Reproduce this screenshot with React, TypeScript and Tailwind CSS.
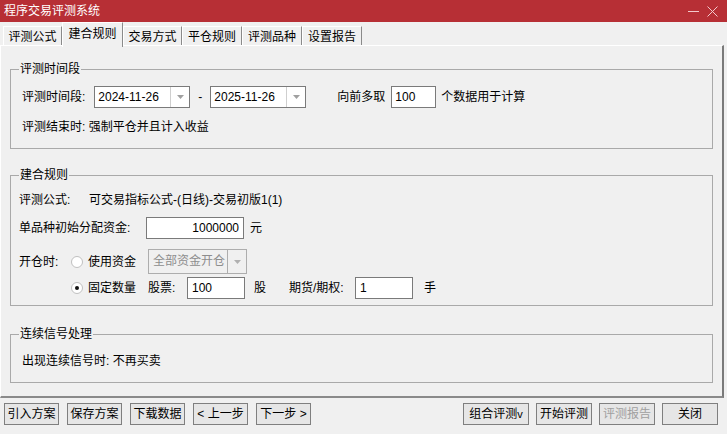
import React from "react";

const FONT = { fontFamily: '"Liberation Sans", "Noto Sans CJK SC", sans-serif' };

function Tri({ color = "#a0a0a0" }: { color?: string }) {
  return (
    <svg width="7" height="4" viewBox="0 0 7 4">
      <path d="M0 0 L7 0 L3.5 4 Z" fill={color} />
    </svg>
  );
}

function DateBox({ value }: { value: string }) {
  return (
    <div className="flex h-[22px] w-[96px] border border-[#7a7a7a] bg-white">
      <div className="flex-1 pl-[3px] leading-[20px]">{value}</div>
      <div className="flex w-[19px] items-center justify-center border-l border-[#cfcfcf]">
        <Tri />
      </div>
    </div>
  );
}

function Radio({ checked }: { checked?: boolean }) {
  return (
    <div className="flex h-[12px] w-[12px] items-center justify-center rounded-full border border-[#c0c0c0] bg-white">
      {checked && <div className="h-[4px] w-[4px] rounded-full bg-[#111]" />}
    </div>
  );
}

function Btn({ children, w, disabled }: { children: React.ReactNode; w: string; disabled?: boolean }) {
  return (
    <div
      className={`flex h-[22px] items-center justify-center border border-[#7f7f7f] bg-[#e6e6e6] ${w} ${
        disabled ? "text-[#a0a0a0]" : "text-black"
      }`}
    >
      {children}
    </div>
  );
}

function Tab({ label, active, w }: { label: string; active?: boolean; w: string }) {
  return (
    <div
      className={`flex items-center justify-center border-l border-t border-r border-l-white border-t-white border-r-[#8a8a8a] ${w} ${
        active ? "relative z-10 -mb-[2px] h-[25px] bg-[#f0f0f0] pb-[3px]" : "h-[19px] pt-[1px]"
      }`}
    >
      {label}
    </div>
  );
}

export default function App() {
  return (
    <div
      className="flex h-[434px] w-[727px] flex-col overflow-hidden bg-[#f0f0f0] text-[12px] text-[#000]"
      style={FONT}
    >
      {/* Title bar */}
      <div className="flex h-[22px] shrink-0 items-center justify-between bg-[#b72f35] pl-[4px] pr-[9px] text-white">
        <span className="text-[12px] leading-[16px]">程序交易评测系统</span>
        <div className="flex items-center gap-[8px]">
          <svg width="11" height="11" viewBox="0 0 11 11">
            <path d="M0 5.5 H11" stroke="#f3c9cb" strokeWidth="1" />
          </svg>
          <svg width="11" height="11" viewBox="0 0 11 11">
            <path d="M0.5 0.5 L10.5 10.5 M10.5 0.5 L0.5 10.5" stroke="#f3c9cb" strokeWidth="1" />
          </svg>
        </div>
      </div>

      {/* Tabs */}
      <div className="flex h-[23px] shrink-0 items-end pl-[3px]">
        <Tab label="评测公式" w="w-[59px]" />
        <Tab label="建合规则" w="w-[61px]" active />
        <Tab label="交易方式" w="w-[59px]" />
        <Tab label="平仓规则" w="w-[60px]" />
        <Tab label="评测品种" w="w-[60px]" />
        <Tab label="设置报告" w="w-[60px]" />
      </div>

      {/* Panel */}
      <div className="flex w-[724px] flex-1 flex-col border-l border-t border-b-2 border-r-2 border-l-white border-t-white border-b-[#8a8a8a] border-r-[#7a7a7a] pt-[15px]">
        {/* Group 1 */}
        <fieldset className="ml-[9px] w-[703px] border border-[#a9a9a9] p-0">
          <legend className="ml-[8px] px-[1px] leading-[16px]">评测时间段</legend>
          <div className="pl-[11px] pt-[9px] pb-[13px]">
            <div className="flex h-[22px] items-center">
              <span>评测时间段:</span>
              <div className="ml-[9px]">
                <DateBox value="2024-11-26" />
              </div>
              <span className="w-[20px] text-center">-</span>
              <DateBox value="2025-11-26" />
              <span className="ml-[31px]">向前多取</span>
              <div className="ml-[6px] h-[22px] w-[45px] border border-[#7a7a7a] bg-white pl-[3px] leading-[20px]">
                100
              </div>
              <span className="ml-[5px]">个数据用于计算</span>
            </div>
            <div className="mt-[11px] h-[16px] leading-[16px]">评测结束时: 强制平仓并且计入收益</div>
          </div>
        </fieldset>

        {/* Group 2 */}
        <fieldset className="ml-[9px] mt-[18px] w-[703px] border border-[#a9a9a9] p-0">
          <legend className="ml-[8px] px-[1px] leading-[16px]">建合规则</legend>
          <div className="pl-[8px] pt-[9px] pb-[6px]">
            <div className="flex h-[16px] items-center leading-[16px]">
              <span className="w-[70px]">评测公式:</span>
              <span>可交易指标公式-(日线)-交易初版1(1)</span>
            </div>
            <div className="mt-[9px] flex h-[22px] items-center">
              <span className="w-[127px]">单品种初始分配资金:</span>
              <div className="h-[22px] w-[98px] border border-[#7a7a7a] bg-white pr-[4px] text-right leading-[20px]">
                1000000
              </div>
              <span className="ml-[6px]">元</span>
            </div>
            <div className="mt-[10px] flex h-[25px] items-center">
              <span className="w-[52px]">开仓时:</span>
              <div className="flex w-[77px] items-center gap-[5px]">
                <Radio />
                <span>使用资金</span>
              </div>
              <div className="flex h-[25px] w-[99px] border border-[#adadad] bg-[#f0f0f0] text-[#8d8d8d]">
                <div className="flex-1 pl-[4px] leading-[23px]">全部资金开仓</div>
                <div className="flex w-[19px] items-center justify-center border-l border-[#adadad]">
                  <Tri color="#b0b0b0" />
                </div>
              </div>
            </div>
            <div className="mt-[3px] flex h-[22px] items-center">
              <span className="w-[52px]" />
              <div className="flex w-[77px] items-center gap-[5px]">
                <Radio checked />
                <span>固定数量</span>
              </div>
              <span className="w-[39px]">股票:</span>
              <div className="h-[22px] w-[58px] border border-[#7a7a7a] bg-white pl-[4px] leading-[20px]">100</div>
              <span className="ml-[9px]">股</span>
              <span className="ml-[23px] w-[66px]">期货/期权:</span>
              <div className="h-[22px] w-[58px] border border-[#7a7a7a] bg-white pl-[4px] leading-[20px]">1</div>
              <span className="ml-[11px]">手</span>
            </div>
          </div>
        </fieldset>

        {/* Group 3 */}
        <fieldset className="ml-[9px] mt-[20px] w-[703px] border border-[#a9a9a9] p-0">
          <legend className="ml-[8px] px-[1px] leading-[16px]">连续信号处理</legend>
          <div className="pl-[11px] pt-[11px] pb-[13px]">
            <div className="h-[16px] leading-[16px]">出现连续信号时: 不再买卖</div>
          </div>
        </fieldset>
      </div>

      {/* Bottom buttons */}
      <div className="flex h-[36px] shrink-0 items-start justify-between pl-[4px] pr-[9px] pt-[5px]">
        <div className="flex gap-[8px]">
          <Btn w="w-[55px]">引入方案</Btn>
          <Btn w="w-[55px]">保存方案</Btn>
          <Btn w="w-[55px]">下载数据</Btn>
          <Btn w="w-[55px]">&lt; 上一步</Btn>
          <Btn w="w-[55px]">下一步 &gt;</Btn>
        </div>
        <div className="flex gap-[7px]">
          <Btn w="w-[66px]">
            组合评测<span className="text-[11px] leading-[12px]">v</span>
          </Btn>
          <Btn w="w-[56px]">开始评测</Btn>
          <Btn w="w-[56px]" disabled>
            评测报告
          </Btn>
          <Btn w="w-[56px]">关闭</Btn>
        </div>
      </div>
    </div>
  );
}
